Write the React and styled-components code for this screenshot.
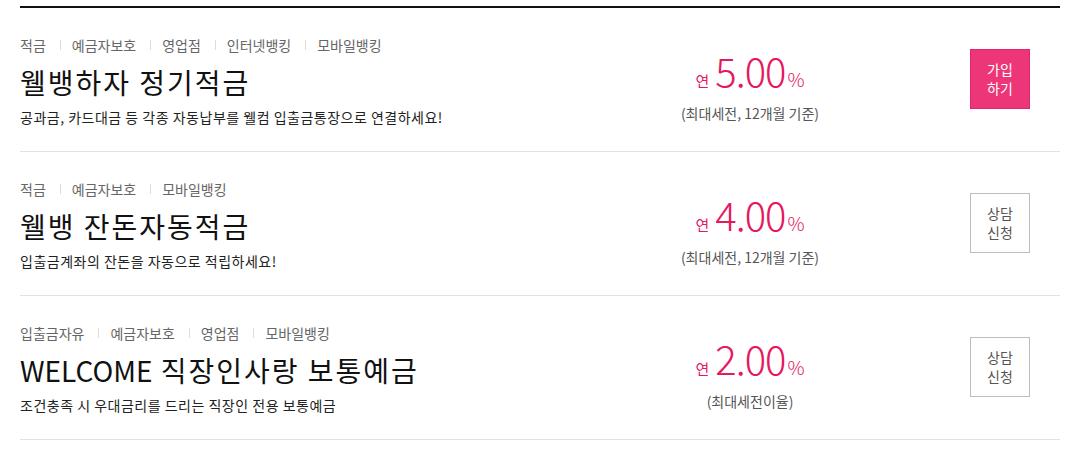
import React from "react";
import styled, { createGlobalStyle } from "styled-components";

const Global = createGlobalStyle`
  html, body { margin: 0; padding: 0; background: #fff; }
  body { font-family: "Noto Sans CJK KR", "Noto Sans", sans-serif; color: #222; }
`;

const List = styled.ul`
  list-style: none;
  margin: 6px 13px 0 20px;
  padding: 0;
  border-top: 2px solid #111;
`;

const Row = styled.li`
  display: grid;
  grid-template-columns: 1fr 200px 60px;
  column-gap: 120px;
  padding: 27px 30px 25px 0;
  align-items: center;
  border-bottom: 1px solid #e2e2e2;
`;

const Info = styled.div`
  display: flex;
  flex-direction: column;
`;

const Tags = styled.ul`
  display: flex;
  list-style: none;
  margin: 0 0 9px;
  padding: 0;
  font-size: 14px;
  line-height: 20px;
  color: #666;
`;

const Tag = styled.li`
  display: flex;
  align-items: center;
  & + &::before {
    content: "";
    width: 1px;
    height: 10px;
    background: #ddd;
    margin: 0 11px 0 14px;
  }
`;

const Title = styled.h3`
  margin: 0;
  font-size: 28px;
  font-weight: 400;
  line-height: 36px;
  color: #111;
  letter-spacing: 2px;
`;

const Latin = styled.span`
  letter-spacing: 0;
`;

const Desc = styled.p`
  margin: 8px 0 0;
  font-size: 14px;
  line-height: 18px;
  letter-spacing: 0.5px;
  color: #222;
`;

const Rate = styled.div`
  display: flex;
  flex-direction: column;
  align-items: center;
  padding-top: 8px;
`;

const RateLine = styled.div`
  display: flex;
  align-items: baseline;
  color: #e6185e;
  line-height: 44px;
`;

const Prefix = styled.span`
  font-size: 15px;
  margin-right: 6px;
`;

const Num = styled.span`
  font-size: 40px;
  font-weight: 300;
  letter-spacing: -1px;
`;

const Pct = styled.span`
  font-size: 19px;
  font-weight: 300;
  margin-left: 2px;
`;

const Note = styled.div`
  margin-top: 1px;
  font-size: 14px;
  line-height: 18px;
  color: #555;
`;

const Button = styled.button`
  width: 60px;
  height: 60px;
  margin-top: -4px;
  padding: 0;
  box-sizing: border-box;
  font-family: inherit;
  font-size: 14px;
  line-height: 19px;
  cursor: pointer;
  border: 1px solid ${p => (p.$primary ? "#e2246a" : "#bdbdbd")};
  background: ${p => (p.$primary ? "#ec3677" : "#fff")};
  color: ${p => (p.$primary ? "#fff" : "#555")};
`;

const products = [
  {
    tags: ["적금", "예금자보호", "영업점", "인터넷뱅킹", "모바일뱅킹"],
    title: [null, "웰뱅하자 정기적금"],
    desc: "공과금, 카드대금 등 각종 자동납부를 웰컴 입출금통장으로 연결하세요!",
    rate: "5.00",
    note: "(최대세전, 12개월 기준)",
    btn: ["가입", "하기"],
    primary: true,
  },
  {
    tags: ["적금", "예금자보호", "모바일뱅킹"],
    title: [null, "웰뱅 잔돈자동적금"],
    desc: "입출금계좌의 잔돈을 자동으로 적립하세요!",
    rate: "4.00",
    note: "(최대세전, 12개월 기준)",
    btn: ["상담", "신청"],
  },
  {
    tags: ["입출금자유", "예금자보호", "영업점", "모바일뱅킹"],
    title: ["WELCOME", " 직장인사랑 보통예금"],
    desc: "조건충족 시 우대금리를 드리는 직장인 전용 보통예금",
    rate: "2.00",
    note: "(최대세전이율)",
    btn: ["상담", "신청"],
  },
];

export default function App() {
  return (
    <>
      <Global />
      <List>
        {products.map((p, i) => (
          <Row key={i}>
            <Info>
              <Tags>
                {p.tags.map(t => (
                  <Tag key={t}>{t}</Tag>
                ))}
              </Tags>
              <Title>
                {p.title[0] && <Latin>{p.title[0]}</Latin>}
                {p.title[1]}
              </Title>
              <Desc>{p.desc}</Desc>
            </Info>
            <Rate>
              <RateLine>
                <Prefix>연</Prefix>
                <Num>{p.rate}</Num>
                <Pct>%</Pct>
              </RateLine>
              <Note>{p.note}</Note>
            </Rate>
            <Button $primary={p.primary}>
              {p.btn[0]}
              <br />
              {p.btn[1]}
            </Button>
          </Row>
        ))}
      </List>
    </>
  );
}
